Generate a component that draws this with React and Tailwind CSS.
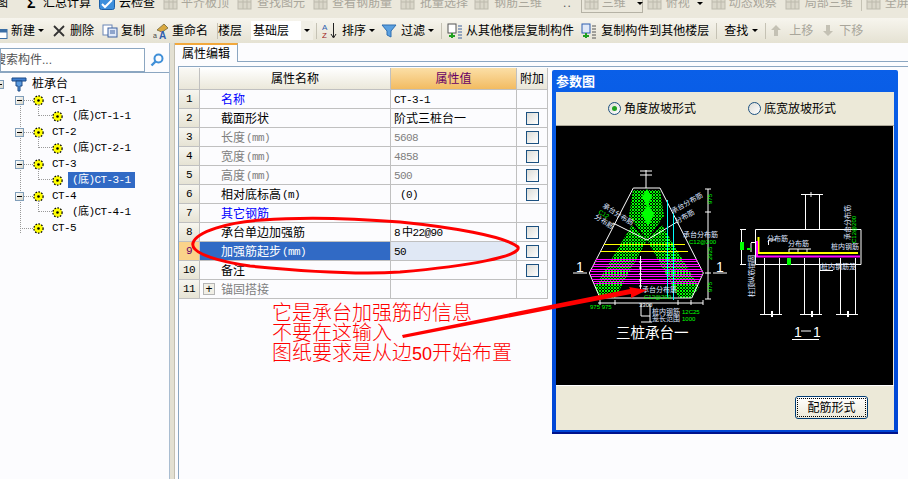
import React from 'react';

const GREY = 'text-[#a9a69b]';

// latin text in the old bitmap font is 6px wide per character
const M = ({ children, className = '' }) => (
  <span className={`font-['Liberation_Mono','Noto_Sans_CJK_SC',monospace] text-[11px] tracking-[-0.6px] ${className}`}>{children}</span>
);

const Arrow = ({ className = '' }) => (
  <span className={`w-0 h-0 border-x-[3px] border-x-transparent border-t-[3px] border-t-black ${className}`} />
);

const Sep = ({ className = '' }) => <span className={`w-px h-[16px] bg-[#c5c2b4] ${className}`} />;

const DimIcon = ({ className = '' }) => (
  <svg width="16" height="14" viewBox="0 0 16 14" className={`shrink-0 ${className}`}>
    <rect x="1" y="2" width="13" height="11" fill="#dad7ca" stroke="#bdbaad" />
    <path d="M1 6h13M6 2v11M10 2v11" stroke="#bdbaad" />
  </svg>
);

const Gear = () => (
  <svg width="11" height="11" viewBox="0 0 11 11" className="shrink-0">
    <circle cx="5.5" cy="5.5" r="4.6" fill="#ffff00" stroke="#000" strokeWidth="1.2" strokeDasharray="1.6 1.4" />
    <circle cx="5.5" cy="5.5" r="3" fill="#ffff00" />
    <circle cx="5.5" cy="5.5" r="1.3" fill="#000" />
  </svg>
);

const Expander = ({ className = '' }) => (
  <span className={`w-[9px] h-[9px] border border-[#7f9db9] bg-gradient-to-br from-white to-[#d8d5c7] flex items-center justify-center shrink-0 ${className}`}>
    <span className="w-[5px] h-px bg-black" />
  </span>
);

const Group = ({ name, last }) => (
  <div className="h-[16px] flex items-center relative">
    {last ? (
      <span className="ml-[20px] w-[13px] border-t border-dotted border-[#999]" />
    ) : (
      <>
        <Expander className="ml-[15px]" />
        <span className="w-[9px] border-t border-dotted border-[#999]" />
      </>
    )}
    <Gear />
    <M className="ml-[8px]">{name}</M>
  </div>
);

const Child = ({ name, selected }) => (
  <div className="h-[16px] flex items-center relative">
    <span className="absolute left-[38px] -top-[4px] h-[12px] w-[14px] border-l border-b border-dotted border-[#999]" />
    <span className="ml-[52px] flex items-center">
      <Gear />
    </span>
    <span className={`ml-[5px] pl-[4px] w-[67px] h-[16px] flex items-center ${selected ? 'bg-[#316ac5] text-white' : ''}`}>
      <M>(底){name}</M>
    </span>
  </div>
);

const Check = () => (
  <span className="w-[13px] h-[13px] border border-[#1c5180] bg-gradient-to-br from-[#dcdcd7] to-white" />
);

const rows = [
  { n: 1, name: '名称', color: 'text-[#0000ff]', value: 'CT-3-1', mono: true },
  { n: 2, name: '截面形状', value: '阶式三桩台一', check: true },
  { n: 3, name: '长度', unit: '(mm)', color: 'text-[#808080]', value: '5608', mono: true, valueColor: 'text-[#808080]', check: true },
  { n: 4, name: '宽度', unit: '(mm)', color: 'text-[#808080]', value: '4858', mono: true, valueColor: 'text-[#808080]', check: true },
  { n: 5, name: '高度', unit: '(mm)', color: 'text-[#808080]', value: '500', mono: true, valueColor: 'text-[#808080]', check: true },
  { n: 6, name: '相对底标高', unit: '(m)', value: ' (0)', mono: true, check: true },
  { n: 7, name: '其它钢筋', color: 'text-[#0000ff]', value: '' },
  { n: 8, name: '承台单边加强筋', value: <>8<span className="ml-[2px]">中</span>22@90</>, mono: true, check: true },
  { n: 9, name: '加强筋起步', unit: '(mm)', value: '50', mono: true, check: true, active: true },
  { n: 10, name: '备注', value: '', check: true },
  { n: 11, name: '锚固搭接', color: 'text-[#808080]', value: '', plus: true },
];

const PropTable = () => (
  <div className="w-[370px] grid grid-cols-[21px_191px_126px_31px]">
    <div className="h-[22px] border-r border-b border-[#c0c0c0] bg-gradient-to-b from-[#faf9f5] to-[#e9e6d9]" />
    <div className="h-[22px] border-r border-b border-[#c0c0c0] bg-gradient-to-b from-white to-[#ebe8da] flex items-center justify-center">属性名称</div>
    <div className="h-[22px] border-r border-b border-[#c0c0c0] bg-gradient-to-b from-[#fbdfa6] to-[#f2bb60] flex items-center justify-center text-[#660066]">属性值</div>
    <div className="h-[22px] border-r border-b border-[#c0c0c0] bg-gradient-to-b from-[#faf9f5] to-[#e9e6d9] flex items-center justify-center">附加</div>
    {rows.map((r) => (
      <React.Fragment key={r.n}>
        <div className={`h-[19px] pt-px border-r border-b border-[#c0c0c0] flex items-center justify-center ${r.active ? 'bg-[#fbd38a] text-[#660066]' : 'bg-gradient-to-b from-[#f7f6ef] to-[#e6e3d4]'}`}>
          <M>{r.n}</M>
        </div>
        <div className={`h-[19px] pt-[2px] border-r border-b border-[#c0c0c0] flex items-center ${r.plus ? 'pl-[3px]' : 'pl-[21px]'} ${r.active ? 'bg-[#316ac5] text-white' : r.color || ''}`}>
          {r.plus && (
            <span className="w-[12px] h-[12px] -mt-[2px] mr-[6px] border border-[#b5b5b5] bg-[#f1efe6] flex items-center justify-center text-black text-[12px] leading-none">+</span>
          )}
          {r.name}
          {r.unit && <M className="ml-px">{r.unit}</M>}
        </div>
        <div className={`h-[19px] pt-[2px] border-r border-b border-[#c0c0c0] flex items-center pl-[3px] whitespace-pre ${r.active ? 'bg-[#e0e8f5]' : ''} ${r.valueColor || ''}`}>
          {r.mono ? <M>{r.value}</M> : r.value}
        </div>
        <div className="h-[19px] border-r border-b border-[#c0c0c0] flex items-center justify-center">
          {r.check && <Check />}
        </div>
      </React.Fragment>
    ))}
  </div>
);

const Radio = ({ on, label }) => (
  <label className="flex items-center gap-[3px]">
    <span className="w-[13px] h-[13px] rounded-full border-[1.5px] border-[#1c5180] bg-gradient-to-br from-[#dcdcd7] to-white flex items-center justify-center">
      {on && <span className="w-[5px] h-[5px] rounded-full bg-[#21a121]" />}
    </span>
    {label}
  </label>
);

// hexagon edges of the three-pile cap, in picture coords
const leftX = (y) => (y < 273 ? 633.3 - ((y - 188) * 44) / 85 : 589.3 + ((y - 273) * 10.7) / 25);
const rightX = (y) => (y < 273 ? 660 + ((y - 188) * 43.3) / 85 : 703.3 - ((y - 273) * 11.6) / 25);
const magenta = [260, 262, 265, 267, 270, 272, 275, 277, 280, 282, 284];

const Label = ({ x, y, rot, fill = '#dfe6ff', size = 7, children }) => (
  <text x={x} y={y} fill={fill} fontSize={size} transform={rot ? `rotate(${rot} ${x} ${y})` : undefined}>{children}</text>
);

const Drawing = () => (
  <svg viewBox="556 126 337 259" className="w-[337px] h-[259px] block bg-black">
    <defs>
      <pattern id="hatch" width="3" height="3" patternUnits="userSpaceOnUse">
        <path d="M0 0L3 3M3 0L0 3" stroke="#00ff00" strokeWidth="1" />
      </pattern>
    </defs>
    {/* plan view */}
    <path d="M633 190H660L664 216L647 240L629 216Z" fill="url(#hatch)" />
    <path d="M632 225L647 240L615 298H600L595 287Z" fill="url(#hatch)" />
    <path d="M662 225L647 240L679 298H692L699 287Z" fill="url(#hatch)" />
    <path d="M647 189L652 197L647 206L642 197Z" fill="#00ff00" />
    <path d="M648 204L654 214L648 226L642 214Z" fill="#00ff00" />
    <path d="M633.3 188H660L703.3 273L691.7 298H600L589.3 273Z" fill="none" stroke="#fff" />
    <path d="M613 223L647 240L677 222" fill="none" stroke="#fff" />
    <path d="M604 244.5H685M601 251.5H688" stroke="#ffff00" />
    {magenta.map((y) => (
      <line key={y} x1={leftX(y)} x2={rightX(y)} y1={y - 0.5} y2={y - 0.5} stroke="#ff00ff" />
    ))}
    <path d="M667.5 200V298M673.5 213V300" stroke="#00ffff" />
    <path d="M640.5 256V290M639 262h3M639 268h3M639 274h3M639 280h3M639 286h3" stroke="#fff" />
    <path d="M646 170V188M640 171H652M640 175H652" stroke="#fff" />
    <path d="M598 303H703M600 300V305M615 300V305M678 300V305M691 300V305M703 300V305" stroke="#fff" />
    <path d="M708 189V299M705 189H711M705 212H711M705 273H711M705 299H711" stroke="#fff" />
    <path d="M641 304V316H650M650 304V322M641 322H652" stroke="#fff" fill="none" />
    <path d="M573 273H587M713 273H727" stroke="#fff" />
    <text x="576" y="272" fill="#fff" fontSize="14">1</text>
    <text x="716" y="272" fill="#fff" fontSize="14">1</text>
    <text x="639" y="307" fill="#fff" fontSize="6">3300</text>
    <Label x={602} y={207} rot={32}>承台分布筋</Label>
    <Label x={594} y={218} rot={32}>分布筋</Label>
    <Label x={598} y={213} rot={32} size={6} fill="#00ff00">C12</Label>
    <Label x={673} y={214} rot={-30}>承台分布筋</Label>
    <Label x={677} y={224} rot={-30}>分布筋</Label>
    <Label x={683} y={237}>承台分布筋</Label>
    <Label x={689} y={244} size={6} fill="#00ff00">C12@200</Label>
    <Label x={642} y={292}>承台分布筋</Label>
    <Label x={644} y={299} size={6} fill="#00ff00">C12@200</Label>
    <Label x={652} y={314}>桩内钢筋</Label>
    <Label x={682} y={314} size={6} fill="#00ff00">12C25</Label>
    <Label x={652} y={321}>笼长范围</Label>
    <Label x={682} y={321} size={6} fill="#00ff00">1000</Label>
    <Label x={590} y={309} size={6} fill="#00ff00">975 975</Label>
    <Label x={712} y={204} rot={-90} size={6} fill="#00ff00">975</Label>
    <Label x={712} y={260} rot={-90} size={6} fill="#00ff00">2925</Label>
    <Label x={712} y={292} rot={-90} size={6} fill="#00ff00">975</Label>
    <text x="616" y="338" fill="#fff" fontSize="14.5">三桩承台一</text>
    {/* section 1-1 */}
    <path d="M755.5 229.5H861V264.5H755.5Z" fill="none" stroke="#fff" />
    <path d="M758.5 237V253H858" fill="none" stroke="#ffff00" strokeWidth="2" />
    <path d="M757 241V256.5H860" fill="none" stroke="#ff00ff" strokeWidth="2" />
    <path d="M764.5 258V314M779.5 258V314M804.5 258V314M819.5 258V314M840.5 258V314M855.5 258V314" stroke="#fff" />
    <path d="M760 314.5H782M800 314.5H822M836 314.5H858" stroke="#fff" />
    <path d="M772 311V317M812 311V317M848 311V317" stroke="#fff" strokeWidth="2" />
    <path d="M805.5 194V229M819.5 194V229M801 194.5H823M811 192V197" stroke="#fff" />
    <path d="M741.5 229.5V265M740 229.5H746M740 264.5H746M751 242.5H756M751 243V252" stroke="#fff" fill="none" />
    <rect x="740" y="242" width="4" height="8" fill="#00ff00" />
    <rect x="747" y="248" width="4" height="2" fill="#00ff00" />
    <rect x="787" y="258" width="4" height="7" fill="#00ff00" />
    <path d="M768.5 245V240H776M789 249H811M789 249V252M798 249V252M807 249V252" stroke="#fff" fill="none" />
    <path d="M820 270.5H833M820 265V270" stroke="#fff" fill="none" />
    <Label x={767} y={241}>分布筋</Label>
    <Label x={788} y={246}>分布筋</Label>
    <Label x={831} y={249}>桩内钢筋</Label>
    <Label x={821} y={269}>桩内钢筋笼</Label>
    <Label x={754} y={297} rot={-90}>柱顶纵筋锚固</Label>
    <Label x={850} y={240} rot={-90}>承台分布筋</Label>
    <Label x={856} y={243} rot={-90} size={6} fill="#00ff00">C12@200</Label>
    <text x="794" y="337" fill="#fff" fontSize="14">1</text>
    <path d="M801 331H811" stroke="#fff" />
    <text x="813" y="337" fill="#fff" fontSize="14">1</text>
    <path d="M792 339.5H819" stroke="#fff" />
  </svg>
);

const ParamDialog = () => (
  <div className="absolute left-[552px] top-[70px] w-[346px] h-[364px] rounded-t-[2px] bg-gradient-to-b from-[#0a5fe8] to-[#0046d5] border-b-[2px] border-b-[#00138c] px-[4px] pb-[2px] flex flex-col">
    <div className="h-[22px] flex items-center text-white font-bold text-[13px] leading-none">参数图</div>
    <div className="flex-1 bg-[#ece9d8] flex flex-col">
      <div className="h-[34px] flex items-center pl-[52px] gap-[52px] border-b border-[#aca899]">
        <Radio on label="角度放坡形式" />
        <Radio label="底宽放坡形式" />
      </div>
      <Drawing />
      <div className="flex-1 border-t border-white flex items-start justify-end pt-[10px] pr-[26px]">
        <button className="w-[73px] h-[23px] rounded-[3px] border border-[#003c74] bg-gradient-to-b from-white to-[#ece9d8] flex items-center justify-center outline-1 outline-dotted outline-black -outline-offset-3">配筋形式</button>
      </div>
    </div>
  </div>
);

const Annotations = () => (
  <>
    <div className="absolute left-[272px] top-[303px] text-[20px] leading-[20px] font-light text-[#ff0000] whitespace-nowrap">
      <div>它是承台加强筋的信息</div>
      <div>不要在这输入</div>
      <div>图纸要求是从边<span className="text-[18px]">50</span>开始布置</div>
    </div>
    <svg className="absolute inset-0 pointer-events-none" width="908" height="479" viewBox="0 0 908 479">
      <path
        d="M193 243C196 232 228 222 262 220C300 217 350 218 400 222C450 227 505 236 518 247C522 256 470 266 400 272C350 275 290 270 250 266C222 262 190 254 193 243Z"
        fill="none"
        stroke="#ff0000"
        strokeWidth="3"
      />
      <path d="M402 335L630 289L629 287L647 290L631 298L631 294L403 338Z" fill="#ff0000" />
    </svg>
  </>
);

export default function App() {
  return (
    <div className="relative w-[908px] h-[479px] overflow-hidden bg-[#fcfcfe] text-black text-[12px] leading-none font-['Liberation_Sans','Noto_Sans_CJK_SC',sans-serif]">
      {/* top menu row, cut off by the window edge */}
      <div className="h-[18px] bg-[#ebe8dc] overflow-hidden">
        <div className="h-[16px] -mt-[5px] flex items-center whitespace-nowrap">
          <span className="-ml-[16px] w-[24px] shrink-0">绘图</span>
          <span className="ml-[19px] w-[8px] text-[14px] font-bold">Σ</span>
          <span className="ml-[8px]">汇总计算</span>
          <svg width="16" height="14" viewBox="0 0 16 14" className="ml-[8px] shrink-0">
            <rect x="0.5" y="0.5" width="15" height="13" rx="2" fill="#3d8fdc" stroke="#1b5fa8" />
            <path d="M3 8l3 3 7-7" stroke="#fff" strokeWidth="2" fill="none" />
          </svg>
          <span className="ml-[4px]">云检查</span>
          <DimIcon className="ml-[8px]" />
          <span className={`ml-[2px] ${GREY}`}>平齐板顶</span>
          <DimIcon className="ml-[8px]" />
          <span className={`ml-[4px] ${GREY}`}>查找图元</span>
          <DimIcon className="ml-[8px]" />
          <span className={`ml-[3px] ${GREY}`}>查看钢筋量</span>
          <DimIcon className="ml-[8px]" />
          <span className={`ml-[4px] ${GREY}`}>批量选择</span>
          <DimIcon className="ml-[6px]" />
          <span className={`ml-[4px] ${GREY}`}>钢筋三维</span>
          <span className="ml-[21px] text-[#555] tracking-[1px]">..</span>
          <span className={`ml-[9px] w-[62px] h-[20px] shrink-0 border border-[#b5b2a5] flex items-center ${GREY}`}>
            <DimIcon className="ml-[2px]" />
            <span className="ml-[2px]">三维</span>
            <Arrow className="ml-[11px] border-t-[#a9a69b]" />
          </span>
          <DimIcon className="ml-[4px]" />
          <span className={`ml-[3px] ${GREY}`}>俯视</span>
          <Arrow className="ml-[7px] border-t-[#a9a69b]" />
          <DimIcon className="ml-[8px]" />
          <span className={`ml-[2px] ${GREY}`}>动态观察</span>
          <DimIcon className="ml-[8px]" />
          <span className={`ml-[4px] ${GREY}`}>局部三维</span>
          <span className="ml-[8px] w-px h-[16px] bg-[#c5c2b4] shrink-0" />
          <DimIcon className="ml-[4px]" />
          <span className={`ml-[3px] shrink-0 ${GREY}`}>全屏</span>
        </div>
      </div>

      {/* component toolbar */}
      <div className="h-[25px] bg-gradient-to-b from-[#f7f5ee] to-[#e5e2d3] flex items-center whitespace-nowrap">
        <svg width="8" height="10" viewBox="0 0 8 10" className="-mb-[6px]">
          <rect x="-6" y="0.5" width="13" height="9" fill="#fff" stroke="#3a6ea5" />
          <rect x="-6" y="0.5" width="13" height="3" fill="#3a6ea5" />
        </svg>
        <span className="ml-[3px]">新建</span>
        <Arrow className="ml-[3px]" />
        <svg width="12" height="12" viewBox="0 0 12 12" className="ml-[9px]">
          <path d="M1 1L11 11M11 1L1 11" stroke="#333" strokeWidth="1.8" />
        </svg>
        <span className="ml-[5px]">删除</span>
        <svg width="16" height="14" viewBox="0 0 16 14" className="ml-[8px]">
          <rect x="1" y="1" width="9" height="10" fill="#fff" stroke="#6b86b5" />
          <rect x="6" y="4" width="9" height="9" fill="#dfe8f7" stroke="#3f62a0" />
          <path d="M8 7h5M8 9h5" stroke="#3f62a0" />
        </svg>
        <span className="ml-[3px]">复制</span>
        <svg width="16" height="16" viewBox="0 0 16 16" className="ml-[8px]">
          <path d="M4 7L11 1L15 5L9 9Z" fill="#d9a93f" stroke="#8a7a4a" />
          <text x="0" y="15" fontSize="7" fill="#444">a</text>
          <text x="6" y="15.5" fontSize="10" fontWeight="bold" fill="#2f5fb0">A</text>
        </svg>
        <span className="ml-[3px]">重命名</span>
        <Sep className="ml-[9px]" />
        <span className="ml-0">楼层</span>
        <span className="ml-[9px] w-[62px] h-[19px] bg-white flex items-center pl-[2px]">
          基础层
          <span className="ml-auto w-[12px] h-[19px] bg-[#f1efe6] flex items-center justify-center">
            <Arrow />
          </span>
        </span>
        <Sep className="ml-[3px]" />
        <svg width="16" height="16" viewBox="0 0 16 16" className="ml-[5px]">
          <text x="0" y="7" fontSize="8" fill="#2f5fb0">A</text>
          <text x="0" y="15" fontSize="8" fill="#a02020">Z</text>
          <path d="M11.5 0V14M9 11l2.5 4 2.5-4" stroke="#222" fill="none" />
        </svg>
        <span className="ml-[4px]">排序</span>
        <Arrow className="ml-[3px]" />
        <svg width="16" height="14" viewBox="0 0 16 14" className="ml-[6px]">
          <path d="M1 1H15L10 7V13L6 11V7Z" fill="#5aa0e0" stroke="#2f6fb0" />
        </svg>
        <span className="ml-[4px]">过滤</span>
        <Arrow className="ml-[3px]" />
        <Sep className="ml-[7px]" />
        <svg width="16" height="16" viewBox="0 0 16 16" className="ml-[5px]">
          <rect x="1" y="1" width="8" height="9" fill="#fff" stroke="#555" />
          <path d="M2 13h6M5 10v5" stroke="#20a020" strokeWidth="2" />
          <path d="M11 3h4M11 6h4M11 9h4M11 12h4M11 15h4" stroke="#3f62a0" />
        </svg>
        <span className="ml-[3px]">从其他楼层复制构件</span>
        <svg width="16" height="16" viewBox="0 0 16 16" className="ml-[7px]">
          <rect x="1" y="1" width="8" height="9" fill="#dfe8f7" stroke="#2f5fb0" />
          <path d="M2 13h6M5 10v5" stroke="#20a020" strokeWidth="2" />
          <path d="M11 3h4M11 6h4M11 9h4M11 12h4M11 15h4" stroke="#555" />
        </svg>
        <span className="ml-[4px]">复制构件到其他楼层</span>
        <Sep className="ml-[7px]" />
        <span className="ml-[7px]">查找</span>
        <Arrow className="ml-[4px]" />
        <Sep className="ml-[7px]" />
        <svg width="10" height="11" viewBox="0 0 10 11" className="ml-[5px]">
          <path d="M5 0L10 5H7V11H3V5H0Z" fill="#c4c1b4" />
        </svg>
        <span className={`ml-[8px] ${GREY}`}>上移</span>
        <svg width="10" height="11" viewBox="0 0 10 11" className="ml-[10px]">
          <path d="M5 11L10 6H7V0H3V6H0Z" fill="#c4c1b4" />
        </svg>
        <span className={`ml-[6px] ${GREY}`}>下移</span>
      </div>

      <div className="flex h-[436px]">
        {/* component tree */}
        <div className="w-[170px] pt-[5px] border-r border-[#a9bdd1] flex flex-col">
          <div className="flex h-[24px] shrink-0">
            <div className="w-[145px] border border-[#8ba6c1] bg-white flex items-center overflow-hidden">
              <span className="-ml-[7px] text-[#555] whitespace-nowrap">搜索构件...</span>
            </div>
            <div className="w-[24px] flex items-center justify-center">
              <svg width="14" height="14" viewBox="0 0 14 14">
                <circle cx="8.5" cy="5.5" r="4" fill="none" stroke="#3f8fd8" strokeWidth="2" />
                <path d="M5.5 8.5L1.5 12.5" stroke="#3f8fd8" strokeWidth="2.4" />
              </svg>
            </div>
          </div>
          <div className="flex-1 border-t border-[#8ba6c1] pt-[3px] relative whitespace-nowrap">
            <span className="absolute left-[20px] top-[28px] h-[132px] border-l border-dotted border-[#999]" />
            <div className="h-[16px] flex items-center">
              <Expander className="-ml-[5px]" />
              <svg width="16" height="15" viewBox="0 0 16 15" className="ml-[7px]">
                <path d="M1 1H15V4H1Z" fill="#3f7fd0" stroke="#1c4a86" />
                <path d="M5 4H11V9H9V14H7V9H5Z" fill="#5b9ade" stroke="#1c4a86" />
              </svg>
              <span className="ml-[5px]">桩承台</span>
            </div>
            <Group name="CT-1" />
            <Child name="CT-1-1" />
            <Group name="CT-2" />
            <Child name="CT-2-1" />
            <Group name="CT-3" />
            <Child name="CT-3-1" selected />
            <Group name="CT-4" />
            <Child name="CT-4-1" />
            <Group name="CT-5" last />
          </div>
        </div>
        <div className="w-[5px] bg-[#e3e0d2] border-r border-[#c2bfb1]" />

        {/* property editor */}
        <div className="flex-1 flex flex-col">
          <div className="h-[19px] flex shrink-0">
            <div className="w-[63px] border-t-2 border-t-[#f2a83c] border-r border-r-[#8ba6c1] flex items-center justify-center">属性编辑</div>
            <div className="flex-1 border-b border-[#8ba6c1]" />
          </div>
          <div className="mt-[4px] ml-[3px] flex-1 border-l border-t border-[#8ba6c1] pt-px">
            <PropTable />
          </div>
        </div>
      </div>

      <ParamDialog />
      <Annotations />
    </div>
  );
}
